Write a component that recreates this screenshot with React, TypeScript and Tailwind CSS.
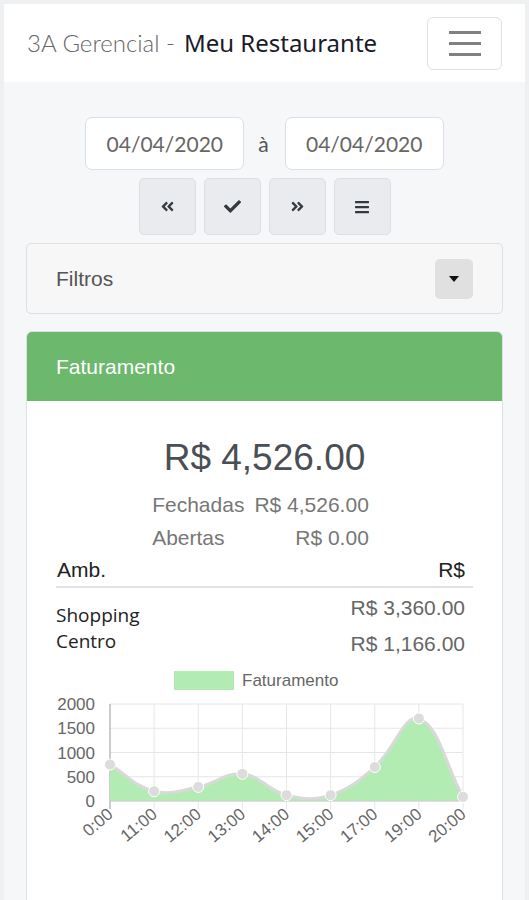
import { FaAngleDoubleLeft, FaAngleDoubleRight, FaCheck, FaBars } from "react-icons/fa";

const sans = { fontFamily: '"Liberation Sans", Arial, sans-serif' };

const horas = ["0:00", "11:00", "12:00", "13:00", "14:00", "15:00", "17:00", "19:00", "20:00"];
const valores = [750, 200, 290, 560, 120, 120, 700, 1700, 86];

// plot area in svg coords
const left = 54;
const right = 407;
const top = 42;
const bottom = 139;
const step = (right - left) / (horas.length - 1);
const yOf = (v: number) => bottom - (v * (bottom - top)) / 2000;

type Pt = { x: number; y: number };

function splinePath(pts: Pt[], t = 0.4) {
  const clampY = (y: number) => Math.min(bottom, Math.max(top - 4, y));
  let d = `M ${pts[0].x} ${pts[0].y}`;
  const cps = pts.map((cur, i) => {
    const prev = pts[i - 1] ?? cur;
    const next = pts[i + 1] ?? cur;
    const d01 = Math.hypot(cur.x - prev.x, cur.y - prev.y);
    const d12 = Math.hypot(next.x - cur.x, next.y - cur.y);
    const sum = d01 + d12 || 1;
    const fa = (t * d01) / sum;
    const fb = (t * d12) / sum;
    return {
      prev: { x: cur.x - fa * (next.x - prev.x), y: clampY(cur.y - fa * (next.y - prev.y)) },
      next: { x: cur.x + fb * (next.x - prev.x), y: clampY(cur.y + fb * (next.y - prev.y)) },
    };
  });
  for (let i = 1; i < pts.length; i++) {
    const a = cps[i - 1].next;
    const b = cps[i].prev;
    d += ` C ${a.x} ${a.y} ${b.x} ${b.y} ${pts[i].x} ${pts[i].y}`;
  }
  return d;
}

function Grafico() {
  const pts = valores.map((v, i) => ({ x: left + i * step, y: yOf(v) }));
  const line = splinePath(pts);
  const area = `${line} L ${right} ${bottom} L ${left} ${bottom} Z`;

  return (
    <svg width="418" height="222" className="block" style={sans}>
      {/* legenda */}
      <rect x="118" y="9" width="60" height="19" fill="#b3ecb3" />
      <text x="186" y="24" fontSize="17" fill="#666">
        Faturamento
      </text>

      {/* grade */}
      {[0, 500, 1000, 1500, 2000].map((v) => (
        <g key={v}>
          <line x1={left} x2={right} y1={yOf(v)} y2={yOf(v)} stroke="#e6e6e6" />
          <text x="39" y={yOf(v) + 6} fontSize="17" fill="#666" textAnchor="end">
            {v}
          </text>
        </g>
      ))}
      {horas.map((h, i) => (
        <line
          key={h}
          x1={left + i * step}
          x2={left + i * step}
          y1={top}
          y2={bottom + 8}
          stroke={i === 0 ? "#999" : "#e6e6e6"}
        />
      ))}

      <path d={area} fill="#b3ecb3" />
      <path d={line} fill="none" stroke="#d9d9d9" strokeWidth="3" />
      <line x1={left} x2={right} y1={bottom} y2={bottom} stroke="#c9cfc9" />
      {pts.map((p, i) => (
        <circle key={i} cx={p.x} cy={p.y} r="5.5" fill="#dcdcdc" stroke="#fff" strokeWidth="1" />
      ))}

      {horas.map((h, i) => {
        const x = left + i * step + 4;
        const y = 154;
        return (
          <text
            key={h}
            x={x}
            y={y}
            fontSize="17"
            fill="#666"
            textAnchor="end"
            transform={`rotate(-40 ${x} ${y})`}
          >
            {h}
          </text>
        );
      })}
    </svg>
  );
}

function DateInput({ value }: { value: string }) {
  return (
    <div
      className="w-[159px] h-[53px] bg-white border border-[#dcdfe3] rounded-[7px] flex items-center justify-center text-[21px] text-[#666]"
      style={{ fontFamily: "Lato, sans-serif" }}
    >
      {value}
    </div>
  );
}

function IconButton({ children }: { children: React.ReactNode }) {
  return (
    <button className="w-[57px] h-[57px] bg-[#e9ebee] border border-[#dcdfe3] rounded-[5px] flex items-center justify-center text-[#343a40]">
      {children}
    </button>
  );
}

export default function App() {
  return (
    <div className="min-h-screen bg-[#eef0f2] px-1 pt-1">
      <nav className="bg-white h-[78px] flex items-center justify-between pl-[23px] pr-[23px]">
        <div className="flex items-baseline gap-[9px]">
          <span className="text-[24px] font-light text-[#666]" style={{ fontFamily: "Lato, sans-serif" }}>
            3A Gerencial -
          </span>
          <span className="text-[24px] font-normal text-[#1a1a2a]" style={{ fontFamily: '"Noto Sans", sans-serif' }}>
            Meu Restaurante
          </span>
        </div>
        <button className="w-[75px] h-[53px] border border-[#e0e0e0] rounded-[6px] flex flex-col items-center justify-center gap-[8px]">
          <span className="block w-[32px] h-[3px] bg-[#808080]" />
          <span className="block w-[32px] h-[3px] bg-[#808080]" />
          <span className="block w-[32px] h-[3px] bg-[#808080]" />
        </button>
      </nav>

      <main className="bg-[#f5f7f9] px-[22px] pt-[35px]">
        <div className="flex items-center justify-center gap-[14px]">
          <DateInput value="04/04/2020" />
          <span className="text-[21px] text-[#555] pr-[2px]" style={{ fontFamily: "Lato, sans-serif" }}>
            à
          </span>
          <DateInput value="04/04/2020" />
        </div>

        <div className="flex justify-center gap-[8px] mt-2">
          <IconButton>
            <FaAngleDoubleLeft size={15} />
          </IconButton>
          <IconButton>
            <FaCheck size={17} />
          </IconButton>
          <IconButton>
            <FaAngleDoubleRight size={15} />
          </IconButton>
          <IconButton>
            <FaBars size={16} />
          </IconButton>
        </div>

        <div className="mt-2 h-[71px] bg-[#f7f7f7] border border-[#dcdfe3] rounded-[5px] flex items-center justify-between px-[29px]">
          <span className="text-[21px] text-[#555]" style={sans}>
            Filtros
          </span>
          <button className="w-[38px] h-[40px] bg-[#e0e0e0] rounded-[5px] flex items-center justify-center">
            <span className="block w-0 h-0 border-x-[5px] border-x-transparent border-t-[6px] border-t-[#111]" />
          </button>
        </div>

        <div className="mt-[17px] border border-[#dcdfe3] rounded-t-[6px] overflow-hidden bg-white" style={sans}>
          <div className="h-[69px] bg-[#6cb86c] flex items-center px-[29px] text-[21px] text-white">Faturamento</div>

          <div className="px-[29px] pt-[35px] pb-[16px]">
            <div className="text-center text-[37px] leading-[44px] text-[#4a4f55]">R$ 4,526.00</div>

            <div className="mt-[8px] flex justify-center pr-2">
              <div className="grid grid-cols-[auto_auto] gap-x-[10px] text-[21px] text-[#777]">
                <span className="h-[33px] flex items-center">Fechadas</span>
                <span className="h-[33px] flex items-center justify-end">R$ 4,526.00</span>
                <span className="h-[33px] flex items-center">Abertas</span>
                <span className="h-[33px] flex items-center justify-end">R$ 0.00</span>
              </div>
            </div>

            <div className="h-[34px] flex items-center justify-between border-b-2 border-[#dee2e6] text-[21px] text-[#222]">
              <span className="pl-[1px]">Amb.</span>
              <span className="pr-2">R$</span>
            </div>
            <div className="h-[38px] flex justify-between">
              <span className="pt-[13px] text-[19px] text-[#222]" style={{ fontFamily: '"Open Sans", sans-serif' }}>
                Shopping
              </span>
              <span className="pt-[4px] pr-2 text-[21px] text-[#666]">R$ 3,360.00</span>
            </div>
            <div className="h-[29px] flex justify-between">
              <span className="pt-[1px] text-[19px] text-[#222]" style={{ fontFamily: '"Open Sans", sans-serif' }}>
                Centro
              </span>
              <span className="pt-[2px] pr-2 text-[21px] text-[#666]">R$ 1,166.00</span>
            </div>

            <div className="mt-[7px]">
              <Grafico />
            </div>
          </div>
        </div>
      </main>
    </div>
  );
}
